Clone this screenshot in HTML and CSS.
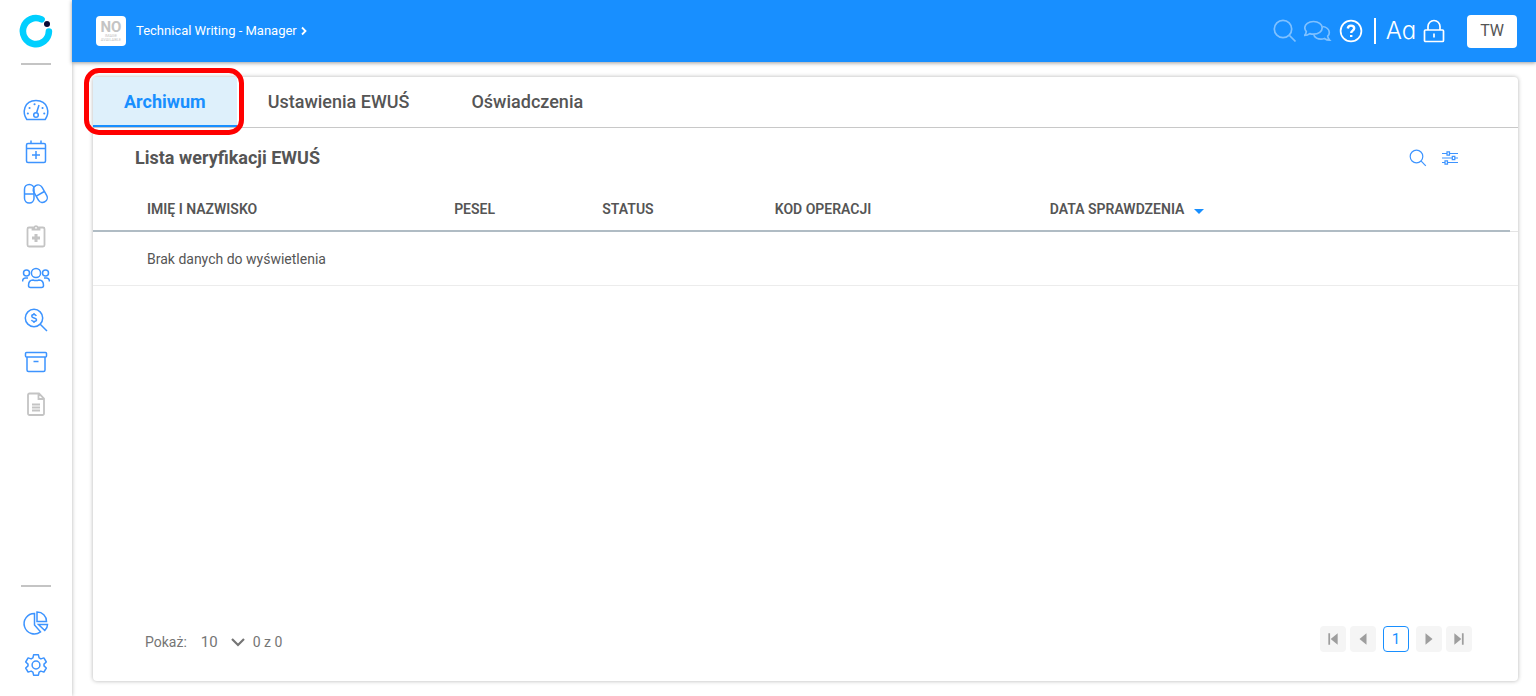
FILE: index.html
```
<!DOCTYPE html>
<html lang="pl">

<head>
    <meta charset="UTF-8" />
    <title>Archiwum EWUŚ</title>
    <link rel="stylesheet" href="styles.css">
</head>
<body>
    <!-- left menu -->
    <nav class="sidebar">
        <a class="logo" href="#" aria-label="Start">
            <svg width="34" height="34" viewBox="0 0 34 34">
                <path d="M22.6 5.4A13 13 0 1 0 29.9 17.600" fill="none" stroke="#00cfff" stroke-width="6.6" stroke-linecap="round"/>
                <circle cx="28" cy="10" r="3" fill="#0b0b35"/>
            </svg>
        </a>
        <span class="line"></span>
        <ul class="menu">
            <li><a href="#" aria-label="Pulpit">
                <svg viewBox="0 0 28 28">
                    <path d="M4.800 23.500C.2 17 1.500 4.500 14 4.500S27.800 17 23.200 23.500Z"/>
                    <circle cx="14" cy="19" r="2.300"/>
                    <path d="M14.600 16.700 17 9"/>
                    <path class="dots" d="M5.800 17.500h.1M7.500 12h.1M12.500 8.200h.1M20.500 12h.1M22.200 17.500h.1"/>
                </svg>
            </a></li>
            <li><a href="#" aria-label="Terminarz">
                <svg viewBox="0 0 28 28">
                    <rect x="4.500" y="5.500" width="19" height="19" rx="1.500"/>
                    <path d="M4.500 10.500h19M9 2.500v3M19 2.500v3M14 13v8M10 17h8"/>
                </svg>
            </a></li>
            <li><a href="#" aria-label="Leki">
                <svg viewBox="0 0 28 28">
                    <rect x="2.500" y="4.500" width="9.500" height="18.500" rx="4.700"/>
                    <path d="M2.500 14H12"/>
                    <rect x="13.500" y="4.500" width="9.500" height="18.500" rx="4.700" transform="rotate(-30 18.200 13.700)"/>
                    <path d="M14.300 16.200 22.300 11.500"/>
                </svg>
            </a></li>
            <li class="off"><a href="#" aria-label="Karta pacjenta">
                <svg viewBox="0 0 28 28">
                    <path d="M11 5.500H7a1.500 1.500 0 0 0-1.500 1.500v16A1.500 1.500 0 0 0 7 24.500h14a1.500 1.500 0 0 0 1.500-1.500V7A1.500 1.500 0 0 0 21 5.500h-4M10.500 7.500h7v-2h-1.700a1.900 1.900 0 0 0-3.600 0h-1.700Z"/>
                    <path class="cross" d="M14 12v8M10 16h8"/>
                </svg>
            </a></li>
            <li><a href="#" aria-label="Pacjenci">
                <svg viewBox="0 0 28 28">
                    <circle cx="14" cy="9" r="4.600"/>
                    <circle cx="4.500" cy="9" r="3"/>
                    <circle cx="23.500" cy="9" r="3"/>
                    <path d="M8.500 23.500A2 2 0 0 1 6.500 21.500C6.500 17.500 8.500 16 11 16q3 1.200 6 0c2.500 0 4.500 1.500 4.500 5.500a2 2 0 0 1-2 2ZM.6 17.500c0-2.500 1.200-3.500 3-3.500H6M27.400 17.500c0-2.500-1.200-3.500-3-3.500H22"/>
                </svg>
            </a></li>
            <li><a href="#" aria-label="Rozliczenia">
                <svg viewBox="0 0 28 28">
                    <circle cx="12" cy="12" r="8.700"/>
                    <path d="M18.200 18.200 25 25"/>
                    <path d="M14.300 10c-.4-1-1.200-1.400-2.300-1.400-1.300 0-2.200.6-2.200 1.600 0 2.300 4.700 1.200 4.700 3.600 0 1-1 1.700-2.500 1.700-1.300 0-2.200-.6-2.500-1.600M12 7v1.600M12 15.500V17"/>
                </svg>
            </a></li>
            <li><a href="#" aria-label="Archiwum">
                <svg viewBox="0 0 28 28">
                    <rect x="3.500" y="4.500" width="21" height="4.500" rx="1"/>
                    <path d="M5 9v13a1.500 1.500 0 0 0 1.500 1.500h15A1.500 1.500 0 0 0 23 22V9M11.500 13.500h5"/>
                </svg>
            </a></li>
            <li class="off"><a href="#" aria-label="Dokumenty">
                <svg viewBox="0 0 28 28">
                    <path d="M17 3.500H7.500A1.500 1.500 0 0 0 6 5v18.500A1.500 1.500 0 0 0 7.500 25h13a1.500 1.500 0 0 0 1.500-1.500V8.500ZM16.500 3.500v5.500H22M10 14.500h8M10 17.500h8M10 20.500h8"/>
                </svg>
            </a></li>
        </ul>
        <span class="line bottom"></span>
        <ul class="menu">
            <li><a href="#" aria-label="Raporty">
                <svg viewBox="0 0 28 28">
                    <path d="M12.500 4.500a10.200 10.200 0 1 0 6 18.300L12.500 16ZM15 3v9.500h9.500C24.500 7 20.500 3 15 3ZM16.500 15.500H25.500c0 2.500-1 4.500-2.700 6Z"/>
                </svg>
            </a></li>
            <li><a href="#" aria-label="Ustawienia">
                <svg viewBox="0 0 28 28">
                    <path stroke-linejoin="round" d="M11.600 4.300h4.800l.7 3.100 1.800 1 3-1 2.400 4.100-2.300 2.100v1.800l2.300 2.100-2.400 4.100-3-1-1.800 1-.7 3.100h-4.800l-.7-3.100-1.800-1-3 1-2.400-4.100L6 15.400v-1.800l-2.300-2.100 2.400-4.100 3 1 1.800-1Z" transform="translate(0 -.5)"/>
                    <circle cx="14" cy="14" r="3.900"/>
                </svg>
            </a></li>
        </ul>
    </nav>

    <div class="page">
        <header class="topbar">
            <a class="company" href="#">
                <span class="noimage"><b>NO</b><small>IMAGE</small><small>AVAILABLE</small></span>
                <span class="company-name">Technical Writing - Manager</span>
                <svg width="6" height="10" viewBox="0 0 6 10"><path d="M1 1.500 4.500 5 1 8.500" fill="none" stroke="#fff" stroke-width="1.800"/></svg>
            </a>
            <div class="tools">
                <button class="dim" aria-label="Szukaj">
                    <svg width="24" height="24" viewBox="0 0 24 24"><circle cx="10" cy="10" r="8.700"/><path d="m16.500 16.500 6 6"/></svg>
                </button>
                <button class="dim" aria-label="Wiadomości">
                    <svg width="28" height="24" viewBox="1 0 28 24">
                        <path d="M10.500 2.500c5 0 8.700 2.800 8.700 6.300s-3.700 6.400-8.700 6.400q-2 0-3.700-.6Q4.500 16.500 1.500 16.500 3.200 14.500 3.300 12.500 1.800 10.800 1.800 8.800c0-3.500 3.700-6.300 8.700-6.300Z"/>
                        <path d="M19.500 7.500c4 .5 6.800 3 6.800 6 0 1.500-.6 2.700-1.600 3.700q.2 2 2 4-3 0-5.300-1.700-1.800.6-3.400.6c-3.300 0-6-1.600-7.200-4"/>
                    </svg>
                </button>
                <button aria-label="Pomoc">
                    <svg width="24" height="24" viewBox="0 0 24 24"><circle cx="12" cy="12" r="10.400"/><path class="thick" d="M8.800 9.500c.2-1.800 1.400-2.900 3.200-2.900s3.200 1.100 3.200 2.700c0 2.300-3 2.300-3 4.700M12.200 16v2"/></svg>
                </button>
                <span class="separator"></span>
                <button class="letters" aria-label="Rozmiar tekstu">Aa</button>
                <button aria-label="Zablokuj">
                    <svg width="22" height="26" viewBox="0 0 22 26"><rect x="1.500" y="12" width="19" height="11.500" rx="1"/><path d="M5 12V8.500a6 6 0 0 1 12 0V12M11 15.500v4"/></svg>
                </button>
                <button class="user">TW</button>
            </div>
        </header>

        <main class="card">
            <div class="tabs" role="tablist">
                <button class="tab active" role="tab" aria-selected="true">Archiwum</button>
                <button class="tab" role="tab">Ustawienia EWUŚ</button>
                <button class="tab" role="tab">Oświadczenia</button>
            </div>

            <div class="list-head">
                <h2>Lista weryfikacji EWUŚ</h2>
                <button aria-label="Szukaj">
                    <svg width="18" height="18" viewBox="0 0 18 18"><circle cx="7.500" cy="7.500" r="6.300"/><path d="m12.200 12.200 4.600 4.600"/></svg>
                </button>
                <button aria-label="Filtry">
                    <svg width="18" height="18" viewBox="0 0 18 18">
                        <path d="M1 4.500h5M9 4.500h8M1 9h10M14 9h3M1 13.500h3M7 13.500h10"/>
                        <path d="M6 2.800h2.500v3.400H6ZM11.300 7.300h2.500v3.400h-2.500ZM4 11.800h2.500v3.400H4Z"/>
                    </svg>
                </button>
            </div>

            <table class="list">
                <thead>
                    <tr>
                        <th class="name">Imię i nazwisko</th>
                        <th class="pesel">PESEL</th>
                        <th class="status">Status</th>
                        <th class="code">Kod operacji</th>
                        <th>Data sprawdzenia <span class="sort"></span></th>
                        <td class="gutter"></td>
                    </tr>
                </thead>
                <tbody>
                    <tr>
                        <td class="empty" colspan="6">Brak danych do wyświetlenia</td>
                    </tr>
                </tbody>
            </table>

            <div class="list-foot">
                <div class="range">
                    <label for="pageSize">Pokaż:</label>
                    <span class="size">
                        <select id="pageSize">
                            <option>10</option>
                            <option>25</option>
                            <option>50</option>
                        </select>
                        <svg width="14" height="10" viewBox="0 0 14 10"><path d="m1 2 6 6 6-6" fill="none" stroke="#757575" stroke-width="2.200"/></svg>
                    </span>
                    <span>0 z 0</span>
                </div>
                <div class="pager">
                    <button aria-label="Pierwsza"><svg width="12" height="14" viewBox="0 0 10 12"><path d="M1 1h1.500v10H1ZM9 1v10L3 6Z"/></svg></button>
                    <button aria-label="Poprzednia"><svg width="12" height="14" viewBox="0 0 10 12"><path d="M8 1v10L2 6Z"/></svg></button>
                    <button class="current">1</button>
                    <button aria-label="Następna"><svg width="12" height="14" viewBox="0 0 10 12"><path d="M2 1v10l6-5Z"/></svg></button>
                    <button aria-label="Ostatnia"><svg width="12" height="14" viewBox="0 0 10 12"><path d="M1 1v10l6-5ZM7.500 1H9v10H7.500Z"/></svg></button>
                </div>
            </div>
        </main>
    </div>
</body>

</html>
```
FILE: styles.css
```
*{
    margin: 0;
    padding: 0;
    box-sizing: border-box;
}

body{
    display: flex;
    min-height: 100vh;
    font: 14px/20px Roboto, "Liberation Sans", sans-serif;
    color: #555;
    background-color: #fff;
}

button{
    border: none;
    background: none;
    font: inherit;
    color: inherit;
    cursor: pointer;
}

a{
    text-decoration: none;
}

svg{
    display: block;
}

/* left menu */
.sidebar{
    display: flex;
    flex-direction: column;
    align-items: center;
    width: 72px;
    flex-shrink: 0;
    padding: 14px 0 10px;
    box-shadow: 0 0 4px rgba(0, 0, 0, 0.3);
}

.line{
    width: 30px;
    height: 2px;
    margin: 15px 0 24px;
    background-color: #c4c4c4;
}

.line.bottom{
    margin: auto 0 15px;
}

.menu{
    list-style: none;
}

.menu a{
    display: flex;
    align-items: center;
    height: 42px;
}

.menu svg{
    width: 28px;
    height: 28px;
    fill: none;
    stroke: #3d94ff;
    stroke-width: 1.5;
}

.menu .off svg{
    stroke: #c4c4c4;
    stroke-width: 1.8;
}

.menu .dots{
    stroke-width: 2;
    stroke-linecap: round;
}

.menu .off .cross{
    stroke-width: 3;
}

.page{
    display: flex;
    flex-direction: column;
    flex: 1;
    min-width: 0;
}

/* top bar */
.topbar{
    display: flex;
    align-items: center;
    justify-content: space-between;
    height: 62px;
    padding: 0 19px 0 24px;
    background-color: #188fff;
    color: #fff;
    box-shadow: 0 1px 4px rgba(0, 0, 0, 0.4);
    z-index: 1;
}

.company{
    display: flex;
    align-items: center;
    color: #fff;
    font-size: 13px;
}

.company-name{
    margin: 0 4px 0 10px;
}

.noimage{
    display: flex;
    flex-direction: column;
    align-items: center;
    width: 30px;
    height: 30px;
    padding-top: 4px;
    border-radius: 4px;
    background-color: #fff;
    color: #c4c4c4;
}

.noimage b{
    font-size: 15px;
    line-height: 14px;
}

.noimage small{
    font-size: 4px;
    line-height: 4px;
}

.tools{
    display: flex;
    align-items: center;
    gap: 7px;
}

.tools svg{
    fill: none;
    stroke: #fff;
    stroke-width: 1.7;
}

.tools .dim{
    opacity: 0.45;
}

.tools .thick{
    stroke-width: 2.4;
}

.separator{
    width: 2px;
    height: 26px;
    margin: 0 3px 0 4px;
    background-color: #fff;
}

.letters{
    font-family: Inter, sans-serif;
    font-size: 24px;
    font-weight: 300;
    /* round single-storey a */
    font-feature-settings: "cv11";
}

.user{
    height: 33px;
    margin-left: 15px;
    padding: 0 13px;
    border-radius: 4px;
    background-color: #fff;
    color: #555;
    font-size: 16px;
}

/* card */
.card{
    display: flex;
    flex-direction: column;
    flex: 1;
    margin: 15px 18px 15px 21px;
    border-radius: 4px;
    background-color: #fff;
    box-shadow: 0 0 4px rgba(0, 0, 0, 0.3);
}

.tabs{
    display: flex;
    height: 51px;
    border-bottom: 1px solid #c8c8c8;
}

.tab{
    padding: 0 31px;
    font-size: 18px;
    font-weight: 500;
}

.tab.active{
    position: relative;
    background-color: #def0fb;
    box-shadow: inset 0 -2px #188fff;
    color: #188fff;
    font-weight: 700;
}

/* red frame around the chosen tab */
.tab.active::after{
    content: "";
    position: absolute;
    top: -9px;
    right: -7px;
    bottom: -8px;
    left: -9px;
    border: 5px solid #f00;
    border-radius: 15px;
}

.list-head{
    display: flex;
    align-items: center;
    gap: 14px;
    height: 60px;
    padding: 0 59px 0 42px;
}

.list-head h2{
    flex: 1;
    font-size: 18px;
    font-weight: 700;
}

.list-head svg{
    fill: none;
    stroke: #3d94ff;
    stroke-width: 1.2;
}

.list{
    width: 100%;
    table-layout: fixed;
    border-spacing: 0;
}

.list th{
    height: 44px;
    padding-left: 12px;
    border-bottom: 2px solid #b0bcc4;
    text-align: left;
    text-transform: uppercase;
    font-weight: 600;
}

.list .name{
    width: 24.5%;
    padding-left: 54px;
}

.list .pesel{
    width: 10.4%;
}

.list .status{
    width: 12.1%;
}

.list .code{
    width: 19.3%;
}

.list .gutter{
    width: 8px;
    border-bottom: 1px solid #e4e4e4;
}

.list .empty{
    height: 54px;
    padding-left: 54px;
    border-bottom: 1px solid #ececec;
}

.sort{
    display: inline-block;
    margin-left: 6px;
    border: 5px solid transparent;
    border-top-color: #188fff;
    border-bottom: none;
}

.list-foot{
    display: flex;
    align-items: center;
    margin-top: auto;
    padding: 0 46px 29px 52px;
    color: #757575;
}

.range{
    display: flex;
    align-items: center;
    height: 20px;
    margin-top: 6px;
}

.size{
    display: flex;
    align-items: center;
    margin: 0 8px 0 14px;
}

.size select{
    width: 30px;
    appearance: none;
    border: none;
    background: none;
    font: inherit;
    font-size: 15px;
    color: inherit;
}

.pager{
    display: flex;
    gap: 4px;
    margin-left: auto;
}

.pager button{
    display: flex;
    align-items: center;
    justify-content: center;
    width: 26px;
    height: 26px;
    border-radius: 4px;
    background-color: #f5f5f5;
}

.pager svg{
    fill: #9e9e9e;
}

.pager .current{
    margin: 0 3px;
    border: 1px solid #188fff;
    background-color: #fff;
    color: #188fff;
    font-size: 15px;
}
```
